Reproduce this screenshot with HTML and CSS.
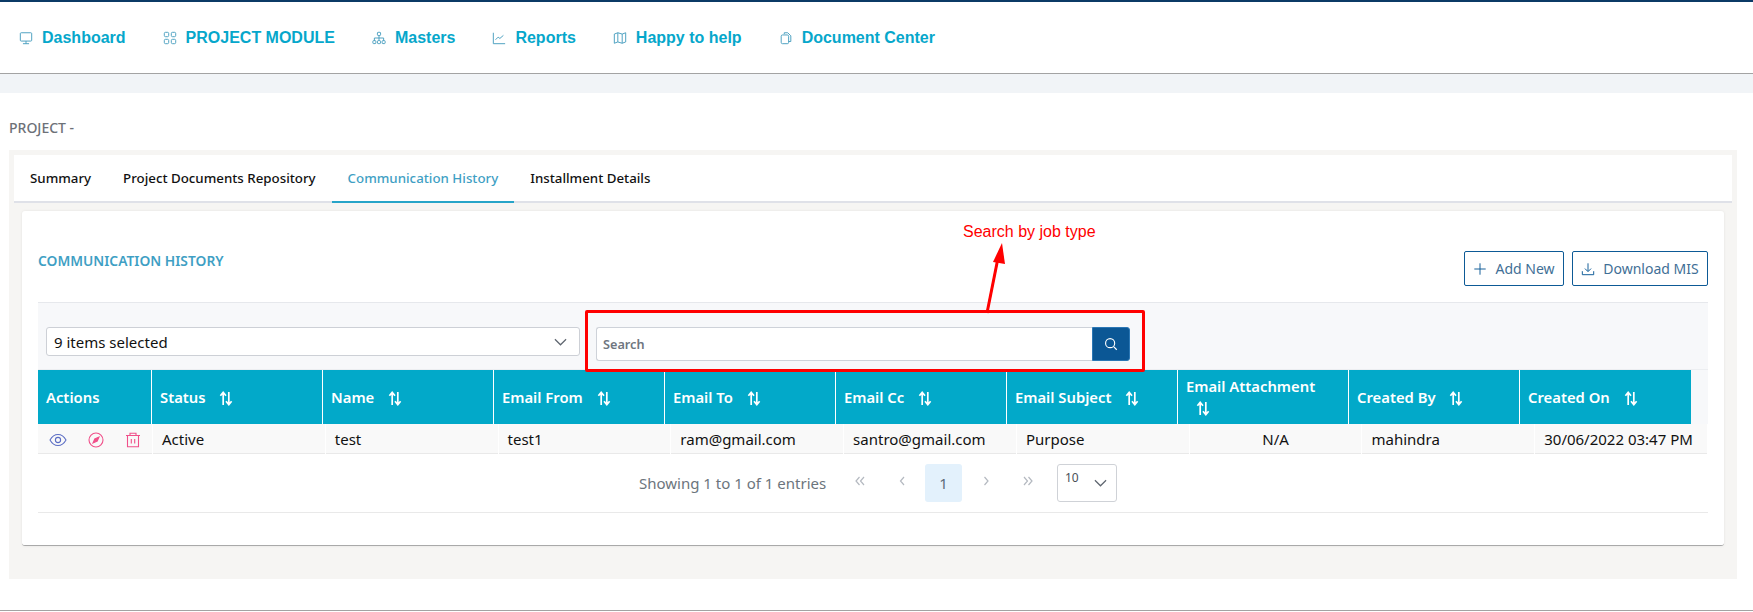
FILE: index.html
```html
<!DOCTYPE html>
<html lang="en">
<head>
<meta charset="UTF-8" />
<title>Communication History</title>
<link rel="stylesheet" href="styles.css">
</head>
<body>
<svg class="sprite" width="0" height="0">
  <symbol id="sort" viewBox="0 0 14 16">
    <path d="M4 15V2M1 5l3-3.500L7 5M10 1v13M7 11l3 3.500 3-3.500" fill="none" stroke="currentColor" stroke-width="1.800"/>
  </symbol>
</svg>

<header class="topnav">
  <a class="nav-item" href="#">
    <svg class="nav-icon" viewBox="0 0 16 16"><rect x="1.500" y="2" width="13" height="9.500" rx="1"/><path d="M8 11.500V14.500M4.500 14.500h7"/></svg>
    Dashboard
  </a>
  <a class="nav-item" href="#">
    <svg class="nav-icon" viewBox="0 0 16 16"><rect x="1.500" y="1.500" width="5" height="5" rx="1.400"/><rect x="9.500" y="1.500" width="5" height="5" rx="1.400"/><rect x="1.500" y="9.500" width="5" height="5" rx="1.400"/><rect x="9.500" y="9.500" width="5" height="5" rx="1.400"/></svg>
    PROJECT MODULE
  </a>
  <a class="nav-item" href="#">
    <svg class="nav-icon" viewBox="0 0 16 16"><rect x="6.200" y="1.500" width="3.600" height="3.600" rx=".8"/><rect x="1" y="11" width="3.400" height="3.400" rx=".8"/><rect x="6.300" y="11" width="3.400" height="3.400" rx=".8"/><rect x="11.600" y="11" width="3.400" height="3.400" rx=".8"/><path d="M8 5v6M2.700 11V8h10.600v3"/></svg>
    Masters
  </a>
  <a class="nav-item" href="#">
    <svg class="nav-icon" viewBox="0 0 16 16"><path d="M1.500 2v12.500H15"/><path d="M4 10l3-3 2 1.500L13 5"/></svg>
    Reports
  </a>
  <a class="nav-item" href="#">
    <svg class="nav-icon" viewBox="0 0 16 16"><path d="M1.500 3.500l4-1.500 5 1.500 4-1.500v10.500l-4 1.500-5-1.500-4 1.500zM5.500 2v10.500M10.500 3.500V14"/></svg>
    Happy to help
  </a>
  <a class="nav-item" href="#">
    <svg class="nav-icon" viewBox="0 0 16 16"><path d="M6 3.500V2h4l3.500 3.500V12H11"/><rect x="2.500" y="4.500" width="8.500" height="10" rx="1.500"/></svg>
    Document Center
  </a>
</header>

<div class="band"></div>

<div class="project-label">PROJECT -</div>

<section class="panel">
  <nav class="tabs">
    <a class="tab" href="#">Summary</a>
    <a class="tab" href="#">Project Documents Repository</a>
    <a class="tab active" href="#">Communication History</a>
    <a class="tab" href="#">Installment Details</a>
  </nav>

  <div class="card">
    <div class="card-head">
      <h2 class="card-title">COMMUNICATION HISTORY</h2>
      <div class="card-actions">
        <button class="btn-outline">
          <svg class="btn-icon" viewBox="0 0 16 16"><path d="M8 1.500v13M1.500 8h13"/></svg>
          Add New
        </button>
        <button class="btn-outline">
          <svg class="btn-icon" viewBox="0 0 16 16"><path d="M8 1.500v9M4.500 7.500L8 11l3.500-3.500M1.500 10.500v4h13v-4"/></svg>
          Download MIS
        </button>
      </div>
    </div>

    <div class="toolbar">
      <div class="multi-select">
        <span>9 items selected</span>
        <svg class="chevron" viewBox="0 0 14 8"><path d="M1 1l6 6 6-6"/></svg>
      </div>
      <div class="search-group">
        <input class="search-input" type="text" placeholder="Search">
        <button class="search-btn">
          <svg viewBox="0 0 16 16"><circle cx="7" cy="7" r="5.200"/><path d="M11 11l3.600 3.600"/></svg>
        </button>

        <!-- annotation drawn over the screenshot -->
        <div class="callout-box"></div>
        <div class="callout-text">Search by job type</div>
        <svg class="callout-arrow" viewBox="0 0 30 80">
          <path d="M5 73L16 18" stroke="#f00" stroke-width="3" fill="none"/>
          <path d="M20 3L11 22 23 24z" fill="#f00"/>
        </svg>
      </div>
    </div>

    <div class="table-head">
      <div class="th">Actions</div>
      <div class="th"><div><span>Status</span> <svg class="sort"><use href="#sort"/></svg></div></div>
      <div class="th"><div><span>Name</span> <svg class="sort"><use href="#sort"/></svg></div></div>
      <div class="th"><div><span>Email From</span> <svg class="sort"><use href="#sort"/></svg></div></div>
      <div class="th"><div><span>Email To</span> <svg class="sort"><use href="#sort"/></svg></div></div>
      <div class="th"><div><span>Email Cc</span> <svg class="sort"><use href="#sort"/></svg></div></div>
      <div class="th"><div><span>Email Subject</span> <svg class="sort"><use href="#sort"/></svg></div></div>
      <div class="th"><div><span>Email Attachment</span> <svg class="sort"><use href="#sort"/></svg></div></div>
      <div class="th"><div><span>Created By</span> <svg class="sort"><use href="#sort"/></svg></div></div>
      <div class="th"><div><span>Created On</span> <svg class="sort"><use href="#sort"/></svg></div></div>
    </div>

    <div class="table-row">
      <div class="td row-actions">
        <svg class="act-view" viewBox="0 0 18 14"><path d="M1 7c2-3.600 5-5.500 8-5.500S15 3.400 17 7c-2 3.600-5 5.500-8 5.500S3 10.600 1 7z"/><circle cx="9" cy="7" r="2.600"/></svg>
        <svg class="act-pink" viewBox="0 0 16 16"><circle cx="8" cy="8" r="7"/><path class="solid" d="M11 5L9.200 9.200 5 11l1.800-4.200z"/></svg>
        <svg class="act-pink" viewBox="0 0 16 16"><path d="M1 3.500h14M5 3.500V1.200h6v2.300M2.500 3.500v11.300h11V3.500M6.300 7v4.500M9.700 7v4.500"/></svg>
      </div>
      <div class="td">Active</div>
      <div class="td">test</div>
      <div class="td">test1</div>
      <div class="td">ram@gmail.com</div>
      <div class="td">santro@gmail.com</div>
      <div class="td">Purpose</div>
      <div class="td center">N/A</div>
      <div class="td">mahindra</div>
      <div class="td">30/06/2022 03:47 PM</div>
    </div>

    <div class="pager">
      <span class="pager-info">Showing 1 to 1 of 1 entries</span>
      <div class="pager-btns">
        <a class="page-link" href="#">
          <svg viewBox="0 0 12 10"><path d="M5.500 1L2 5l3.500 4M10 1L6.500 5l3.500 4"/></svg>
        </a>
        <a class="page-link" href="#">
          <svg viewBox="0 0 12 10"><path d="M8 1L4.500 5 8 9"/></svg>
        </a>
        <a class="page-link current" href="#">1</a>
        <a class="page-link" href="#">
          <svg viewBox="0 0 12 10"><path d="M4.500 1L8 5 4.500 9"/></svg>
        </a>
        <a class="page-link" href="#">
          <svg viewBox="0 0 12 10"><path d="M2 1l3.500 4L2 9M6.500 1L10 5 6.500 9"/></svg>
        </a>
      </div>
      <div class="page-size">
        <span>10</span>
        <svg class="chevron" viewBox="0 0 14 8"><path d="M1 1l6 6 6-6"/></svg>
      </div>
    </div>
  </div>
</section>

<div class="page-foot"></div>
</body>
</html>
```

FILE: styles.css
```css
/* general */
html, body {
  margin: 0;
  padding: 0;
  height: 100%;
  overflow: hidden;
  background: #fff;
  font-family: "Noto Sans", "Open Sans", sans-serif;
  color: #111;
}
a {
  text-decoration: none;
}
.sprite {
  position: absolute;
}

/* top navigation */
.topnav {
  display: flex;
  align-items: center;
  gap: 37px;
  height: 71px;
  padding-left: 19px;
  border-top: 2px solid #0b3a66;
  border-bottom: 1px solid #a3a3a3;
  background: #fff;
}
.nav-item {
  display: flex;
  align-items: center;
  gap: 9px;
  margin-top: 1px;
  color: #06a7cb;
  font-family: "Liberation Sans", Arial, sans-serif;
  font-size: 16px;
  font-weight: 700;
}
.nav-icon {
  width: 14px;
  height: 14px;
  fill: none;
  stroke: #4a9fc0;
  stroke-width: 1.100;
}
.band {
  height: 19px;
  background: #f1f4f7;
}
.project-label {
  height: 57px;
  padding: 28px 0 0 9px;
  box-sizing: border-box;
  color: #6d7178;
  font-size: 14px;
  font-weight: 500;
  line-height: 14px;
}

/* panel and tabs */
.panel {
  margin: 0 16px 0 9px;
  padding: 5px 5px 33px;
  background: #f6f5f3;
}
.tabs {
  display: flex;
  height: 46px;
  background: #fff;
  border-bottom: 2px solid #dfe1e8;
}
.tab {
  display: flex;
  align-items: center;
  height: 46px;
  padding: 0 16px;
  color: #111;
  font-size: 13.300px;
  font-weight: 500;
  white-space: nowrap;
}
.tab.active {
  height: 48px;
  box-sizing: border-box;
  border-bottom: 2px solid #27a4c8;
  color: #3f9fc4;
}

/* card */
.card {
  margin: 8px 8px 0;
  padding: 40px 16px 32px;
  background: #fff;
  border-radius: 3px;
  border-bottom: 1px solid #a9a9a9;
  box-shadow: 0 0 3px rgba(0, 0, 0, 0.08);
}
.card-head {
  display: flex;
  justify-content: space-between;
  align-items: flex-start;
  height: 51px;
}
.card-title {
  margin: 0;
  color: #3f9fc4;
  font-size: 13.800px;
  font-weight: 600;
  line-height: 20px;
}
.card-actions {
  display: flex;
  gap: 8px;
}
.btn-outline {
  display: flex;
  align-items: center;
  justify-content: center;
  gap: 8px;
  height: 35px;
  padding: 0 8px;
  background: #fff;
  border: 1px solid #0d5a96;
  border-radius: 2px;
  color: #3f6f96;
  font-family: inherit;
  font-size: 14px;
}
.btn-outline:first-child {
  width: 100px;
}
.btn-outline:last-child {
  width: 136px;
}
.btn-icon {
  width: 14px;
  height: 14px;
  fill: none;
  stroke: #0d5a96;
  stroke-width: 1.100;
}

/* filter bar */
.toolbar {
  display: flex;
  align-items: flex-start;
  gap: 16px;
  height: 68px;
  padding: 24px 0 0 8px;
  box-sizing: border-box;
  background: #f7f8fa;
  border-top: 1px solid #e6e8ec;
}
.multi-select {
  display: flex;
  align-items: center;
  justify-content: space-between;
  width: 534px;
  height: 29px;
  padding: 0 12px 0 7px;
  box-sizing: border-box;
  background: #fff;
  border: 1px solid #cdd0d6;
  border-radius: 3px;
  font-size: 15px;
}
.chevron {
  width: 13px;
  height: 8px;
  fill: none;
  stroke: #5f6670;
  stroke-width: 1.300;
}
.search-group {
  position: relative;
  display: flex;
  width: 534px;
  height: 34px;
}
.search-input {
  flex: 1;
  min-width: 0;
  padding: 0 6px;
  background: #fff;
  border: 1px solid #ced2d9;
  border-right: 0;
  border-radius: 3px 0 0 3px;
  font-family: inherit;
  font-size: 12.700px;
  font-weight: 600;
}
.search-input::placeholder {
  color: #6f7680;
  opacity: 1;
}
.search-btn {
  display: flex;
  align-items: center;
  justify-content: center;
  width: 38px;
  padding: 0;
  background: #0b5795;
  border: 1px solid #2b77b5;
  border-radius: 0 3px 3px 0;
}
.search-btn svg {
  width: 14px;
  height: 14px;
  fill: none;
  stroke: #fff;
  stroke-width: 1.300;
}

/* red annotation over the search box */
.callout-box {
  position: absolute;
  top: -17px;
  left: -11px;
  right: -15px;
  bottom: -11px;
  border: 3px solid #f00;
  border-radius: 2px;
}
.callout-text {
  position: absolute;
  top: -105px;
  left: 367px;
  color: #f00;
  font-family: "Liberation Sans", Arial, sans-serif;
  font-size: 16px;
  line-height: 20px;
  white-space: nowrap;
}
.callout-arrow {
  position: absolute;
  top: -87px;
  left: 386px;
  width: 30px;
  height: 80px;
}

/* table */
.table-head {
  display: grid;
  grid-template-columns: 114px repeat(9, 171px);
  margin-top: -1px;
  background: #f7f8fa;
  border-top: 1px solid #eceef1;
}
.th {
  display: flex;
  align-items: center;
  box-sizing: border-box;
  height: 54px;
  padding: 0 16px 0 8px;
  background: #02a9c9;
  border-right: 1px solid #fff;
  color: #fff;
  font-size: 14.800px;
  font-weight: 600;
  line-height: 21px;
}
.th:nth-child(10) {
  border-right: 0;
}
.sort {
  width: 14px;
  height: 15px;
  margin-left: 10px;
  vertical-align: -3px;
}
.table-row {
  display: grid;
  grid-template-columns: 115px repeat(9, 1fr);
  height: 29px;
  background: #f9f9f9;
  border-bottom: 1px solid #e9e9e9;
}
.td {
  padding-left: 9px;
  border-right: 1px solid #fff;
  font-size: 15px;
  line-height: 31px;
  white-space: nowrap;
}
.td.center {
  padding-left: 0;
  text-align: center;
}
.row-actions {
  display: flex;
  align-items: center;
  gap: 21px;
  padding-left: 11px;
}
.row-actions svg {
  width: 16px;
  height: 16px;
  fill: none;
  stroke-width: 1.100;
}
.row-actions .act-view {
  width: 18px;
  height: 14px;
  stroke: #5b6dc4;
}
.act-pink {
  stroke: #f0508a;
}
.act-pink .solid {
  fill: #f0508a;
}

/* pagination */
.pager {
  display: flex;
  align-items: center;
  height: 59px;
  padding-left: 601px;
  box-sizing: border-box;
  border-bottom: 1px solid #e9e9e9;
}
.pager-info {
  width: 189px;
  color: #6c757d;
  font-size: 15px;
  white-space: nowrap;
}
.pager-btns {
  display: flex;
  gap: 5px;
  margin-left: 13px;
}
.page-link {
  display: flex;
  align-items: center;
  justify-content: center;
  width: 37px;
  height: 38px;
  border-radius: 3px;
  color: #5b6b7a;
  font-size: 15px;
}
.page-link svg {
  width: 12px;
  height: 10px;
  margin-top: -4px;
  fill: none;
  stroke: #b4b9c0;
  stroke-width: 1.200;
}
.page-link.current {
  background: #e3f1fc;
}
.page-size {
  display: flex;
  align-items: flex-start;
  gap: 15px;
  width: 60px;
  height: 38px;
  margin-left: 11px;
  padding: 4px 0 0 7px;
  box-sizing: border-box;
  background: #fff;
  border: 1px solid #cfd2d7;
  border-radius: 3px;
  color: #4a5058;
  font-size: 12px;
}
.page-size .chevron {
  margin-top: 10px;
}

/* bottom */
.page-foot {
  height: 32px;
  box-sizing: border-box;
  border-bottom: 1px solid #a3a3a3;
}
```
